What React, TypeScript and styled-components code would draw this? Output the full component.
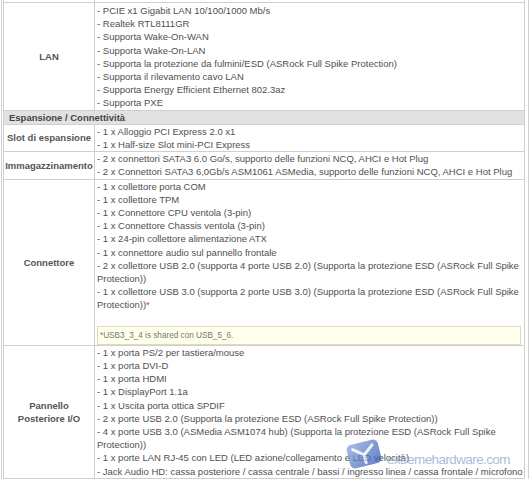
import React from 'react';
import styled, { createGlobalStyle } from 'styled-components';

const Global = createGlobalStyle`
  html, body { margin: 0; padding: 0; background: #fff; }
  body { font-family: "Liberation Sans", Arial, sans-serif; overflow: hidden; }
`;

const Frame = styled.div`
  position: relative;
  width: 522px;
  margin: -8px 0 0 1px;
  padding: 0 3px 0 1px;
  border-left: 1px solid #d2d2d2;
  border-right: 1px solid #d2d2d2;
`;

const Table = styled.table`
  width: 522px;
  border-collapse: separate;
  border-spacing: 0;
  border-left: 1px solid #cfcfcf;
  table-layout: fixed;
`;

const LabelCell = styled.td`
  width: 90px;
  border-right: 1px solid #cfcfcf;
  border-bottom: 1px solid #cfcfcf;
  padding: 0;
  text-align: center;
  vertical-align: middle;
  font-weight: bold;
  font-size: 9.5px;
  line-height: 13.2px;
  color: #555;
`;

const ValueCell = styled.td<{ $pt?: number }>`
  border-right: 1px solid #cfcfcf;
  border-bottom: 1px solid #cfcfcf;
  padding: ${(p) => p.$pt ?? 0}px 2px 0 2px;
  vertical-align: top;
  font-size: 9.5px;
  line-height: 13.2px;
  color: #505050;
`;

const SpacerCell = styled.td`
  height: 10px;
  padding: 0;
  border-right: 1px solid #cfcfcf;
  border-bottom: 1px solid #cfcfcf;
`;

const SectionCell = styled.td`
  background: #e1e1e1;
  border-right: 1px solid #cfcfcf;
  border-bottom: 1px solid #cfcfcf;
  padding: 0 0 0 5px;
  font-weight: bold;
  font-size: 9.5px;
  line-height: 13.2px;
  color: #444;
`;

const Line = styled.div<{ $nowrap?: boolean }>`
  white-space: ${(p) => (p.$nowrap ? 'nowrap' : 'normal')};
`;

const Star = styled.span`
  color: #d04040;
`;

const Blank = styled.div`
  height: 13.2px;
`;

const Note = styled.div`
  margin: 1px 1px 0 0;
  padding: 3px 3px 3px 2px;
  border: 1px solid #dcdcc4;
  background: #ffffec;
  font-size: 8.2px;
  line-height: 11px;
  color: #777;
`;

const Watermark = styled.div`
  position: absolute;
  left: 341px;
  top: 447px;
  display: flex;
  align-items: center;
  gap: 2px;
  pointer-events: none;
  opacity: 0.75;
`;

const WatermarkText = styled.span`
  font-family: "Liberation Sans", sans-serif;
  font-size: 13.5px;
  letter-spacing: -0.6px;
  color: #8fa8cc;
  margin-top: 10px;
`;

const Logo = () => (
  <svg width="42" height="30" viewBox="0 0 42 30">
    <defs>
      <linearGradient id="lg" x1="0" y1="0" x2="1" y2="1">
        <stop offset="0" stopColor="#8aa6e2" />
        <stop offset="1" stopColor="#3458b0" />
      </linearGradient>
    </defs>
    <g transform="rotate(-14 21 15)">
      <rect x="5" y="3" width="32" height="24" rx="5" fill="url(#lg)" />
      <path d="M11 8 L21 16 L31 8 M21 16 L21 24" stroke="#fff" strokeWidth="3" fill="none" strokeLinecap="round" opacity="0.85" />
    </g>
  </svg>
);

const lan = [
  '- PCIE x1 Gigabit LAN 10/100/1000 Mb/s',
  '- Realtek RTL8111GR',
  '- Supporta Wake-On-WAN',
  '- Supporta Wake-On-LAN',
  '- Supporta la protezione da fulmini/ESD (ASRock Full Spike Protection)',
  '- Supporta il rilevamento cavo LAN',
  '- Supporta Energy Efficient Ethernet 802.3az',
  '- Supporta PXE',
];

const slots = ['- 1 x Alloggio PCI Express 2.0 x1', '- 1 x Half-size Slot mini-PCI Express'];

const storage = [
  '- 2 x connettori SATA3 6.0 Go/s, supporto delle funzioni NCQ, AHCI e Hot Plug',
  '- 2 x Connettori SATA3 6,0Gb/s ASM1061 ASMedia, supporto delle funzioni NCQ, AHCI e Hot Plug',
];

const connectors = [
  '- 1 x collettore porta COM',
  '- 1 x collettore TPM',
  '- 1 x Connettore CPU ventola (3-pin)',
  '- 1 x Connettore Chassis ventola (3-pin)',
  '- 1 x 24-pin collettore alimentazione ATX',
  '- 1 x connettore audio sul pannello frontale',
  '- 2 x collettore USB 2.0 (supporta 4 porte USB 2.0) (Supporta la protezione ESD (ASRock Full Spike Protection))',
];

const rear = [
  '- 1 x porta PS/2 per tastiera/mouse',
  '- 1 x porta DVI-D',
  '- 1 x porta HDMI',
  '- 1 x DisplayPort 1.1a',
  '- 1 x Uscita porta ottica SPDIF',
  '- 2 x porte USB 2.0 (Supporta la protezione ESD (ASRock Full Spike Protection))',
  '- 4 x porte USB 3.0 (ASMedia ASM1074 hub) (Supporta la protezione ESD (ASRock Full Spike Protection))',
  '- 1 x porte LAN RJ-45 con LED (LED azione/collegamento e LED velocità)',
];

const Lines = ({ items }: { items: string[] }) => (
  <>
    {items.map((t, i) => (
      <Line key={i}>{t}</Line>
    ))}
  </>
);

export default function App() {
  return (
    <>
      <Global />
      <Frame>
        <Table>
          <tbody>
            <tr>
              <SpacerCell style={{ width: 90 }} />
              <SpacerCell />
            </tr>
            <tr>
              <LabelCell>LAN</LabelCell>
              <ValueCell $pt={1}>
                <Lines items={lan} />
              </ValueCell>
            </tr>
            <tr>
              <SectionCell colSpan={2}>Espansione / Connettività</SectionCell>
            </tr>
            <tr>
              <LabelCell>Slot di espansione</LabelCell>
              <ValueCell>
                <Lines items={slots} />
              </ValueCell>
            </tr>
            <tr>
              <LabelCell>Immagazzinamento</LabelCell>
              <ValueCell>
                <Lines items={storage} />
              </ValueCell>
            </tr>
            <tr>
              <LabelCell>Connettore</LabelCell>
              <ValueCell>
                <Lines items={connectors} />
                <Line>
                  - 1 x collettore USB 3.0 (supporta 2 porte USB 3.0) (Supporta la protezione ESD (ASRock Full Spike
                  Protection))<Star>*</Star>
                </Line>
                <Blank />
                <Note>*USB3_3_4 is shared con USB_5_6.</Note>
              </ValueCell>
            </tr>
            <tr>
              <LabelCell>
                Pannello
                <br />
                Posteriore I/O
              </LabelCell>
              <ValueCell>
                <Lines items={rear} />
                <Line $nowrap>
                  - Jack Audio HD: cassa posteriore / cassa centrale / bassi / ingresso linea / cassa frontale / microfono
                </Line>
              </ValueCell>
            </tr>
          </tbody>
        </Table>
        <Watermark>
          <Logo />
          <WatermarkText>extremehardware.com</WatermarkText>
        </Watermark>
      </Frame>
    </>
  );
}
